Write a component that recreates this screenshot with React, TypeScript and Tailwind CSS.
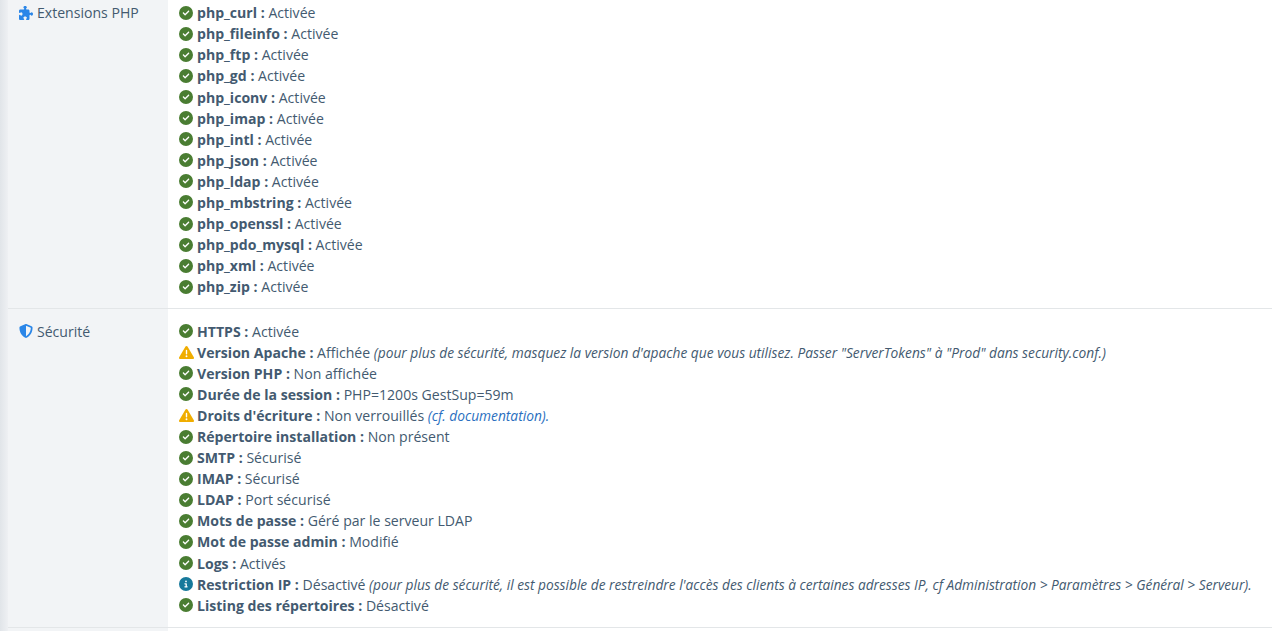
import { FaCircleCheck, FaCircleInfo, FaPuzzlePiece, FaShieldHalved, FaTriangleExclamation } from "react-icons/fa6";
import type { ReactNode } from "react";

type Status = "ok" | "warn" | "info";

type Item = {
  status?: Status;
  label: string;
  value: string;
  note?: ReactNode;
};

const extensions = [
  "php_curl",
  "php_fileinfo",
  "php_ftp",
  "php_gd",
  "php_iconv",
  "php_imap",
  "php_intl",
  "php_json",
  "php_ldap",
  "php_mbstring",
  "php_openssl",
  "php_pdo_mysql",
  "php_xml",
  "php_zip",
];

const security: Item[] = [
  { label: "HTTPS", value: "Activée" },
  {
    status: "warn",
    label: "Version Apache",
    value: "Affichée",
    note: <i className="text-[13.75px]">(pour plus de sécurité, masquez la version d'apache que vous utilisez. Passer "ServerTokens" à "Prod" dans security.conf.)</i>,
  },
  { label: "Version PHP", value: "Non affichée" },
  { label: "Durée de la session", value: "PHP=1200s GestSup=59m" },
  {
    status: "warn",
    label: "Droits d'écriture",
    value: "Non verrouillés",
    note: <i className="text-[13.75px] text-[#2a6fc0]">(cf. documentation).</i>,
  },
  { label: "Répertoire installation", value: "Non présent" },
  { label: "SMTP", value: "Sécurisé" },
  { label: "IMAP", value: "Sécurisé" },
  { label: "LDAP", value: "Port sécurisé" },
  { label: "Mots de passe", value: "Géré par le serveur LDAP" },
  { label: "Mot de passe admin", value: "Modifié" },
  { label: "Logs", value: "Activés" },
  {
    status: "info",
    label: "Restriction IP",
    value: "Désactivé",
    note: <i className="text-[13.73px]">(pour plus de sécurité, il est possible de restreindre l'accès des clients à certaines adresses IP, cf Administration &gt; Paramètres &gt; Général &gt; Serveur).</i>,
  },
  { label: "Listing des répertoires", value: "Désactivé" },
];

function StatusIcon({ status = "ok" }: { status?: Status }) {
  if (status === "warn") return <FaTriangleExclamation className="w-[15px] h-[15px] -mx-[0.5px] text-[#f0ad00] shrink-0" />;
  if (status === "info") return <FaCircleInfo className="w-[14px] h-[14px] text-[#17799b] shrink-0" />;
  return <FaCircleCheck className="w-[14px] h-[14px] text-[#4a7d32] shrink-0" />;
}

function Line({ status, label, value, note }: Item) {
  return (
    <div className="flex items-center gap-[4px] h-[21.08px] whitespace-pre">
      <StatusIcon status={status} />
      <span>
        <b className="font-bold">{label} :</b> {value} {note}
      </span>
    </div>
  );
}

function Row({ icon, title, items, className }: { icon: ReactNode; title: string; items: Item[]; className: string }) {
  return (
    <div className="flex border-b border-[#e3e6e8]">
      <div className={`w-[160px] shrink-0 bg-[#f2f4f6] pl-[11px] ${className}`}>
        <div className="flex items-center gap-[4px] h-[21px]">
          {icon}
          <span>{title}</span>
        </div>
      </div>
      <div className={`flex-1 pl-[11px] ${className}`}>
        {items.map((item) => (
          <Line key={item.label} {...item} />
        ))}
      </div>
    </div>
  );
}

export default function App() {
  return (
    <div className="h-[631px] overflow-hidden bg-white flex text-[14.08px] leading-[21.12px] text-[#435a70] [font-family:'Open_Sans',sans-serif]">
      <div className="w-[8px] shrink-0 bg-gradient-to-r from-[#e1e5e9] to-[#eef0f3]" />
      <div className="flex-1 min-w-0">
        <Row
          icon={<FaPuzzlePiece className="w-[14px] h-[14px] text-[#2a86e8]" />}
          title="Extensions PHP"
          items={extensions.map((name) => ({ label: name, value: "Activée" }))}
          className="pt-[2.24px] pb-[10.64px]"
        />
        <Row
          icon={<FaShieldHalved className="w-[14px] h-[14px] text-[#2a86e8]" />}
          title="Sécurité"
          items={security}
          className="pt-[11.76px] pb-[11.12px]"
        />
        <div className="h-[10px] w-[160px] bg-[#f2f4f6]" />
      </div>
    </div>
  );
}
